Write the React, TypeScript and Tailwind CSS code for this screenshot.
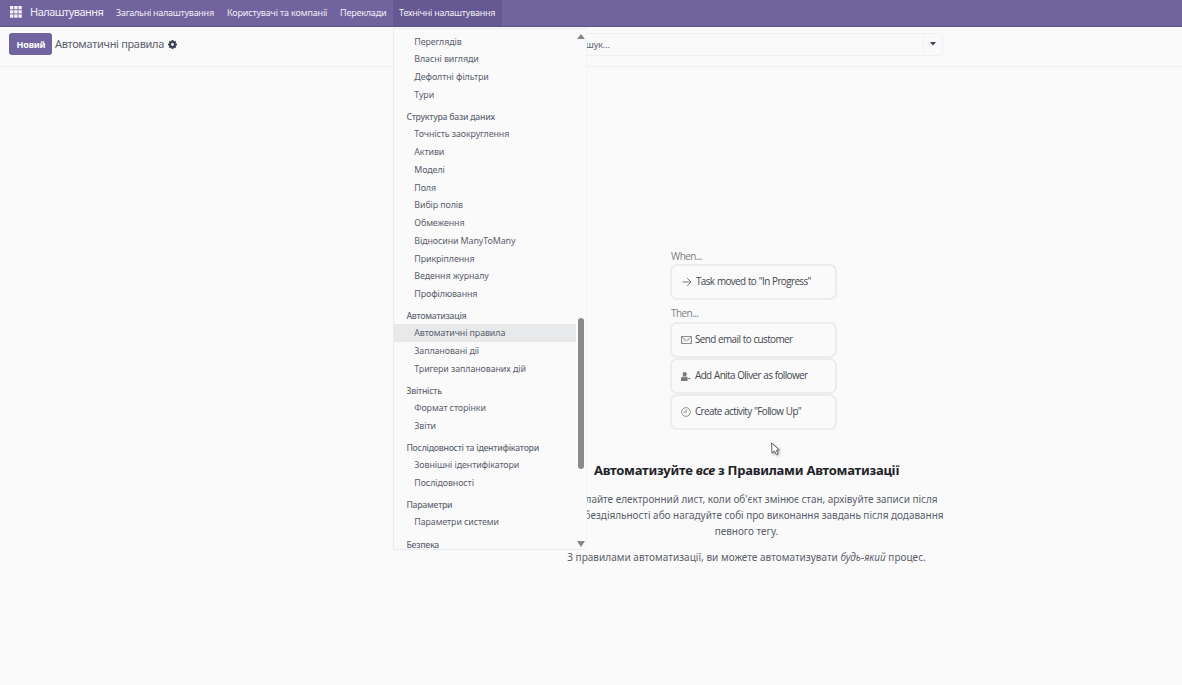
import type { ReactNode } from 'react';

const groups: { title?: string; items: string[] }[] = [
  { items: ['Переглядів', 'Власні вигляди', 'Дефолтні фільтри', 'Тури'] },
  {
    title: 'Структура бази даних',
    items: ['Точність заокруглення', 'Активи', 'Моделі', 'Поля', 'Вибір полів', 'Обмеження', 'Відносини ManyToMany', 'Прикріплення', 'Ведення журналу', 'Профілювання'],
  },
  { title: 'Автоматизація', items: ['Автоматичні правила', 'Заплановані дії', 'Тригери запланованих дій'] },
  { title: 'Звітність', items: ['Формат сторінки', 'Звіти'] },
  { title: 'Послідовності та ідентифікатори', items: ['Зовнішні ідентифікатори', 'Послідовності'] },
  { title: 'Параметри', items: ['Параметри системи'] },
  { title: 'Безпека', items: [] },
];

function AppsIcon() {
  return (
    <svg className="h-[12px] w-[12px]" viewBox="0 0 12 12" fill="#f4f2f8">
      {[0, 4.2, 8.4].map((x) => [0, 4.2, 8.4].map((y) => <rect key={`${x}-${y}`} x={x} y={y} width="3.4" height="3.3" />))}
    </svg>
  );
}

function GearIcon() {
  return (
    <svg className="h-[9px] w-[9px]" viewBox="0 0 16 16">
      <g fill="#374151">
        {[0, 45, 90, 135].map((a) => (
          <rect key={a} x="6.2" y="0" width="3.6" height="16" rx="0.8" transform={`rotate(${a} 8 8)`} />
        ))}
        <circle cx="8" cy="8" r="6" />
      </g>
      <circle cx="8" cy="8" r="2.6" fill="#fafafa" />
    </svg>
  );
}

function ArrowIcon() {
  return (
    <svg className="h-[10px] w-[10px]" viewBox="0 0 10 10" fill="none" stroke="#777b80" strokeWidth="1">
      <path d="M0.5 5H9M5.2 1.2L9 5L5.2 8.8" />
    </svg>
  );
}

function MailIcon() {
  return (
    <svg className="h-[8px] w-[11px]" viewBox="0 0 11 8" fill="none" stroke="#808488" strokeWidth="0.9">
      <path d="M0.5 0.5H10.5V7.5H0.5ZM0.5 0.8L5.5 4.8L10.5 0.8" />
      <path d="M0.5 7.3L3.8 3.6M10.5 7.3L7.2 3.6" strokeWidth="0.4" />
    </svg>
  );
}

function FollowerIcon() {
  return (
    <svg className="h-[9px] w-[10px]" viewBox="0 0 10 9" fill="#777b80">
      <path d="M3.7 0C5 0 5.7 0.9 5.7 2.2S4.9 4.6 3.7 4.6S1.7 3.5 1.7 2.2S2.4 0 3.7 0ZM0 9V7.2C0 5.6 1 4.9 2.2 4.6L3.7 5.4L5.2 4.6C5.8 4.7 6.2 5 6.5 5.4V9Z" />
      <path d="M6.3 6.1H9.6V7.1H6.3Z" />
    </svg>
  );
}

function ClockIcon() {
  return (
    <svg className="h-[10px] w-[10px]" viewBox="0 0 10 10" fill="none" stroke="#808488" strokeWidth="0.85">
      <circle cx="5" cy="5" r="4.4" />
      <path d="M5.2 2.2V5.2H2.6" />
    </svg>
  );
}

function Card({ icon, children, className = '' }: { icon: ReactNode; children: ReactNode; className?: string }) {
  return (
    <div className={`flex items-center rounded-[7px] border-2 border-[#ebeced] bg-[#fafafa] ${className}`}>
      <span className="flex w-[14px] shrink-0 items-center">{icon}</span>
      <span className="pb-px font-['Open_Sans',sans-serif] text-[9.9px] tracking-[-0.6px] [word-spacing:0.5px] whitespace-nowrap text-[#41464d]">{children}</span>
    </div>
  );
}

export default function App() {
  return (
    <div className="relative flex h-[685px] w-[1182px] flex-col overflow-hidden bg-[#fafafa] font-['Noto_Sans',sans-serif] text-[#5a606b]">
      <nav className="flex h-[27px] shrink-0 items-center border-b border-[#5f5190] bg-[#71639e] pb-px text-[9px] whitespace-nowrap text-[#f1eff6]">
        <div className="flex w-[116px] items-center pb-px pl-[10px]">
          <AppsIcon />
          <span className="ml-[8px] text-[11px] leading-[24px] tracking-[-0.52px]">Налаштування</span>
        </div>
        <span className="w-[111px] tracking-[-0.27px]">Загальні налаштування</span>
        <span className="w-[113px] tracking-[-0.17px]">Користувачі та компанії</span>
        <span className="w-[53px] tracking-[-0.2px]">Переклади</span>
        <span className="-mb-px flex h-[26px] w-[109px] items-center bg-[#665892] pb-px pl-[6px] tracking-[-0.24px]">Технічні налаштування</span>
      </nav>

      <header className="flex h-[40px] shrink-0 items-center border-b border-[#eeeff0] pb-[5px] pl-[9px]">
        <button className="h-[22px] w-[43px] rounded-[3px] bg-[#71639e] pt-px pl-px text-[9px] font-bold tracking-[-0.25px] text-white">Новий</button>
        <span className="ml-[3px] w-[113px] text-[11px] tracking-[-0.32px] whitespace-nowrap">Автоматичні правила</span>
        <GearIcon />
        <div className="ml-[389px] flex h-[23px] w-[377px] items-center rounded-[3px] border border-[#f0f1f2]">
          <span className="flex-1 pt-px pl-[7px] text-[9px] tracking-[-0.1px]">Пошук...</span>
          <div className="flex h-full w-[19px] items-center justify-center border-l border-[#f0f1f2]">
            <svg className="h-[4px] w-[6px]" viewBox="0 0 6 4" fill="#374151"><path d="M0 0H6L3 3.6Z" /></svg>
          </div>
        </div>
      </header>

      <main className="flex flex-col items-center pt-[182px] pl-[311px] whitespace-nowrap">
        <section className="ml-[14px] flex w-[167px] flex-col">
          <span className="ml-px h-[15px] font-['Open_Sans',sans-serif] text-[10px] leading-[14px] tracking-[-0.6px] text-[#7c7f84]">When...</span>
          <Card className="h-[36px] pl-[10px]" icon={<ArrowIcon />}>Task moved to "In Progress"</Card>
          <span className="mt-[6px] ml-px h-[16px] font-['Open_Sans',sans-serif] text-[10px] leading-[15px] tracking-[-0.55px] text-[#7c7f84]">Then...</span>
          <Card className="h-[36px] pl-[9px]" icon={<MailIcon />}>Send email to customer</Card>
          <Card className="h-[36px] pl-[9px]" icon={<FollowerIcon />}>Add Anita Oliver as follower</Card>
          <Card className="h-[36px] pl-[9px]" icon={<ClockIcon />}>Create activity "Follow Up"</Card>
        </section>
        <h1 className="mt-[31px] text-[13px] leading-[18px] font-bold tracking-[-0.24px] text-[#1f2329]">
          Автоматизуйте <em>все</em> з Правилами Автоматизації
        </h1>
        <p className="mt-[12px] text-center text-[10px] leading-[16.2px] tracking-[-0.03px]">
          Надсилайте електронний лист, коли об'єкт змінює стан, архівуйте записи після
          <br />
          місяця бездіяльності або нагадуйте собі про виконання завдань після додавання
          <br />
          певного тегу.
        </p>
        <p className="mt-[9px] text-[10px] leading-[16px] tracking-[0.03px]">
          З правилами автоматизації, ви можете автоматизувати <em>будь-який</em> процес.
        </p>
      </main>

      <div className="absolute top-[28px] left-[393px] flex h-[522px] w-[194px] overflow-hidden rounded-[2px] border border-[#e9ebed] border-r-[#f4f5f6] bg-[#fafafa]">
        <div className="w-[182px] shrink-0 pt-[3.7px] text-[8.9px] whitespace-nowrap">
          {groups.map((g, i) => (
            <div key={i}>
              {g.title && <div className="h-[21.6px] pt-[5.6px] pl-[12.4px] text-[8.7px] leading-[16px] font-medium tracking-[-0.26px] text-[#646a75]">{g.title}</div>}
              {g.items.map((item) => (
                <div key={item} className={`h-[17.75px] pl-[20.3px] leading-[17.75px] tracking-[-0.1px] ${item === 'Автоматичні правила' ? 'bg-[#e7e9eb]' : ''}`}>
                  {item}
                </div>
              ))}
            </div>
          ))}
        </div>
        <div className="flex w-[10.5px] shrink-0 flex-col items-center pt-[5px] pb-[2px]">
          <svg className="h-[5px] w-[8px]" viewBox="0 0 8 5" fill="#858585"><path d="M4 0L8 5H0Z" /></svg>
          <div className="mt-[279px] h-[151px] w-[6px] rounded-full bg-[#8b8b8b]" />
          <div className="flex-1" />
          <svg className="h-[6px] w-[8px]" viewBox="0 0 8 6" fill="#858585"><path d="M0 0H8L4 6Z" /></svg>
        </div>
      </div>

      <svg className="absolute top-[442px] left-[770px] h-[15px] w-[13px] drop-shadow-[1px_1px_1px_rgba(0,0,0,0.4)]" viewBox="0 0 13 15">
        <path d="M1.5 1L2 11.2L4.4 9L6.3 12.5L8 11.6L6.3 8.3L9.2 7.8Z" fill="#fff" stroke="#555" strokeWidth="0.9" strokeLinejoin="round" />
      </svg>
    </div>
  );
}
